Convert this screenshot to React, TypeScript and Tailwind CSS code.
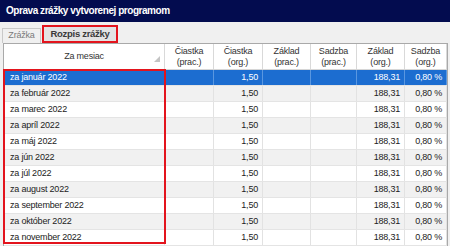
import React from "react";

const months = [
  "január",
  "február",
  "marec",
  "apríl",
  "máj",
  "jún",
  "júl",
  "august",
  "september",
  "október",
  "november",
];

const headers: { a: string; b?: string }[] = [
  { a: "Za mesiac" },
  { a: "Čiastka", b: "(prac.)" },
  { a: "Čiastka", b: "(org.)" },
  { a: "Základ", b: "(prac.)" },
  { a: "Sadzba", b: "(prac.)" },
  { a: "Základ", b: "(org.)" },
  { a: "Sadzba", b: "(org.)" },
];

const widths = ["w-[161px]", "w-[49px]", "w-[49px]", "w-[48px]", "w-[46px]", "w-[48px]", "w-[42px]"];

export default function App() {
  return (
    <div
      className="w-[450px] h-[246px] overflow-hidden bg-[#f0f0f0] flex flex-col relative"
      style={{ fontFamily: '"Liberation Sans", Arial, sans-serif' }}
    >
      {/* Title bar */}
      <div className="h-[22px] shrink-0 bg-[#030c4f] flex items-center pl-[6px]">
        <span className="text-white font-bold text-[10px] tracking-[-0.45px] leading-none">
          Oprava zrážky vytvorenej programom
        </span>
      </div>

      {/* Tabs */}
      <div className="h-[21px] shrink-0 flex items-end pl-[2px]">
        <div className="h-[15px] w-[39px] border border-b-0 border-[#c9c9c9] bg-[#f0f0f0] flex items-center justify-center text-[9px] text-[#7a7a7a] tracking-[-0.2px]">
          Zrážka
        </div>
        <div className="h-[18px] w-[76px] ml-[1px] border-2 border-[#e3141d] bg-[#e3e3e3] flex items-center justify-center text-[9.5px] font-bold text-[#3a3a3a] tracking-[-0.3px]">
          Rozpis zrážky
        </div>
      </div>

      {/* Table */}
      <div className="ml-[3px] w-[445px] border-l border-r border-t border-[#a9a9a9] bg-white flex flex-col text-[9px] tracking-[-0.2px] text-[#222]">
        {/* Header */}
        <div className="h-[26px] flex border-b border-[#d6d6d6] bg-white">
          {headers.map((h, i) => (
            <div
              key={i}
              className={`${widths[i]} shrink-0 h-full border-r border-[#d9d9d9] flex flex-col items-center justify-center leading-[11px] text-[#333] relative`}
            >
              <span>{h.a}</span>
              {h.b && <span>{h.b}</span>}
              {i === 0 && (
                <svg className="absolute right-[4px] top-[12px]" width="6" height="6" viewBox="0 0 6 6">
                  <polygon points="6,0 6,6 0,6" fill="#c4c4c4" />
                </svg>
              )}
            </div>
          ))}
        </div>

        {/* Rows */}
        {months.map((m, r) => {
          const sel = r === 0;
          const bg = sel ? "bg-[#1c6dd0] text-white" : r % 2 === 1 ? "bg-[#f1f1f1]" : "bg-white";
          const line = sel ? "border-[#5a97e0]" : "border-[#e2e2e2]";
          const cells = [`za ${m} 2022`, "", "1,50", "", "", "188,31", "0,80 %"];
          return (
            <div key={r} className={`h-[16px] shrink-0 flex border-b border-[#e4e4e4] ${bg}`}>
              {cells.map((c, i) => (
                <div
                  key={i}
                  className={`${widths[i]} shrink-0 h-full border-r ${line} flex items-center ${
                    i === 0 ? "pl-[6px]" : "justify-end pr-[4px]"
                  } leading-none whitespace-nowrap`}
                >
                  {c}
                </div>
              ))}
            </div>
          );
        })}
      </div>

      {/* Red annotation box over first column */}
      <div className="absolute left-[3px] top-[69px] w-[163px] h-[175px] border-2 border-[#e3141d] pointer-events-none" />
    </div>
  );
}
